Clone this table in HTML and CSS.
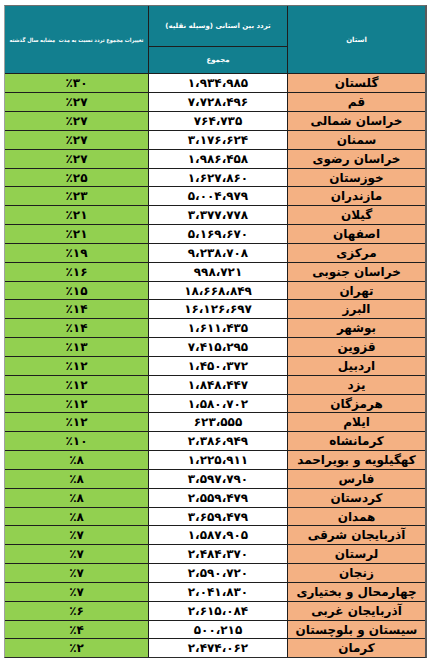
FILE: index.html
```html
<!DOCTYPE html>
<html lang="fa">
<head>
<meta charset="utf-8">
<title>تردد بین استانی</title>
<link rel="stylesheet" href="styles.css">
</head>
<body>
<div class="sheet" dir="rtl">
  <div class="cell head h-prov">استان</div>
  <div class="cell head h-title">تردد بین استانی (وسیله نقلیه)</div>
  <div class="cell head h-change">تغییرات مجموع تردد نسبت به مدت&nbsp; مشابه سال گذشته</div>
  <div class="cell head h-total">مجموع</div>

  <div class="cell prov">گلستان</div><div class="cell num">۱،۹۳۴،۹۸۵</div><div class="cell pct">٪۳۰</div>
  <div class="cell prov">قم</div><div class="cell num">۷،۷۲۸،۴۹۶</div><div class="cell pct">٪۲۷</div>
  <div class="cell prov">خراسان شمالی</div><div class="cell num">۷۶۴،۷۳۵</div><div class="cell pct">٪۲۷</div>
  <div class="cell prov">سمنان</div><div class="cell num">۳،۱۷۶،۶۲۴</div><div class="cell pct">٪۲۷</div>
  <div class="cell prov">خراسان رضوی</div><div class="cell num">۱،۹۸۶،۴۵۸</div><div class="cell pct">٪۲۷</div>
  <div class="cell prov">خوزستان</div><div class="cell num">۱،۶۲۷،۸۶۰</div><div class="cell pct">٪۲۵</div>
  <div class="cell prov">مازندران</div><div class="cell num">۵،۰۰۴،۹۷۹</div><div class="cell pct">٪۲۳</div>
  <div class="cell prov">گیلان</div><div class="cell num">۳،۳۷۷،۷۷۸</div><div class="cell pct">٪۲۱</div>
  <div class="cell prov">اصفهان</div><div class="cell num">۵،۱۶۹،۶۷۰</div><div class="cell pct">٪۲۱</div>
  <div class="cell prov">مرکزی</div><div class="cell num">۹،۲۳۸،۷۰۸</div><div class="cell pct">٪۱۹</div>
  <div class="cell prov">خراسان جنوبی</div><div class="cell num">۹۹۸،۷۲۱</div><div class="cell pct">٪۱۶</div>
  <div class="cell prov">تهران</div><div class="cell num">۱۸،۶۶۸،۸۴۹</div><div class="cell pct">٪۱۵</div>
  <div class="cell prov">البرز</div><div class="cell num">۱۶،۱۲۶،۶۹۷</div><div class="cell pct">٪۱۴</div>
  <div class="cell prov">بوشهر</div><div class="cell num">۱،۶۱۱،۴۳۵</div><div class="cell pct">٪۱۴</div>
  <div class="cell prov">قزوین</div><div class="cell num">۷،۴۱۵،۲۹۵</div><div class="cell pct">٪۱۳</div>
  <div class="cell prov">اردبیل</div><div class="cell num">۱،۴۵۰،۳۷۲</div><div class="cell pct">٪۱۲</div>
  <div class="cell prov">یزد</div><div class="cell num">۱،۸۴۸،۴۴۷</div><div class="cell pct">٪۱۲</div>
  <div class="cell prov">هرمزگان</div><div class="cell num">۱،۵۸۰،۷۰۲</div><div class="cell pct">٪۱۲</div>
  <div class="cell prov">ایلام</div><div class="cell num">۶۲۳،۵۵۵</div><div class="cell pct">٪۱۲</div>
  <div class="cell prov">کرمانشاه</div><div class="cell num">۲،۳۸۶،۹۴۹</div><div class="cell pct">٪۱۰</div>
  <div class="cell prov">کهگیلویه و بویراحمد</div><div class="cell num">۱،۲۲۵،۹۱۱</div><div class="cell pct">٪۸</div>
  <div class="cell prov">فارس</div><div class="cell num">۳،۵۹۷،۷۹۰</div><div class="cell pct">٪۸</div>
  <div class="cell prov">کردستان</div><div class="cell num">۲،۵۵۹،۴۷۹</div><div class="cell pct">٪۸</div>
  <div class="cell prov">همدان</div><div class="cell num">۳،۶۵۹،۴۷۹</div><div class="cell pct">٪۸</div>
  <div class="cell prov">آذربایجان شرقی</div><div class="cell num">۱،۵۸۷،۹۰۵</div><div class="cell pct">٪۷</div>
  <div class="cell prov">لرستان</div><div class="cell num">۲،۴۸۴،۳۷۰</div><div class="cell pct">٪۷</div>
  <div class="cell prov">زنجان</div><div class="cell num">۲،۵۹۰،۷۲۰</div><div class="cell pct">٪۷</div>
  <div class="cell prov">چهارمحال و بختیاری</div><div class="cell num">۲،۰۴۱،۸۳۰</div><div class="cell pct">٪۷</div>
  <div class="cell prov">آذربایجان غربی</div><div class="cell num">۲،۶۱۵،۰۸۴</div><div class="cell pct">٪۶</div>
  <div class="cell prov">سیستان و بلوچستان</div><div class="cell num">۵۰۰،۲۱۵</div><div class="cell pct">٪۴</div>
  <div class="cell prov">کرمان</div><div class="cell num">۲،۴۷۴،۰۶۲</div><div class="cell pct">٪۲</div>
</div>
</body>
</html>
```

FILE: styles.css
```css
html, body {
  margin: 0;
  padding: 0;
  background: #ffffff;
}

body {
  font-family: "DejaVu Sans", "Noto Sans", sans-serif;
}

.sheet {
  display: inline-grid;
  margin: 5px 0 0 4px;
  grid-template-columns: 137px 138px 143px;
  grid-template-rows: 40px 26px repeat(5, 18px 18px 18px 18px 18px 17px) 18px;
  gap: 1px;
  background: #1e1e1e;
  border-top: 1px solid #6f6f6f;
  border-left: 1px solid #a0a0a0;
  border-right: 2px solid #5a5a5a;
  border-bottom: 1px solid #2a2a2a;
}

.cell {
  display: flex;
  align-items: center;
  justify-content: center;
  font-weight: bold;
  color: #000000;
  white-space: nowrap;
  overflow: hidden;
}

.head {
  background: #127f8f;
  color: #ffffff;
  font-size: 7px;
}

.h-prov {
  grid-column: 1;
  grid-row: 1 / span 2;
}

.h-title {
  grid-column: 2;
  grid-row: 1;
}

.h-total {
  grid-column: 2;
  grid-row: 2;
}

.h-change {
  grid-column: 3;
  grid-row: 1 / span 2;
  font-family: "DejaVu Sans Condensed", "DejaVu Sans", sans-serif;
  font-size: 5.6px;
}

.prov {
  background: #f4b183;
  font-size: 12px;
}

.num {
  background: #ffffff;
  font-size: 12px;
  direction: ltr;
}

.pct {
  background: #92d050;
  font-size: 12px;
  direction: ltr;
}
```
